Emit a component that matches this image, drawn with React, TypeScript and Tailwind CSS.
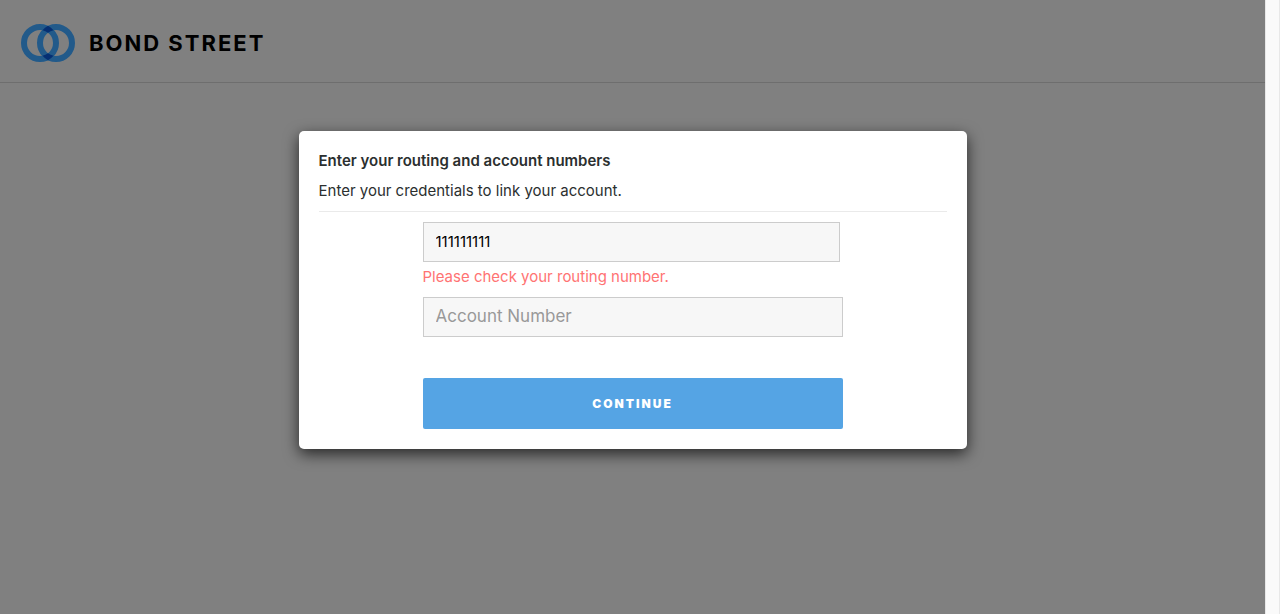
import { useState } from "react";

function Logo() {
  return (
    <a href="#" className="flex items-center gap-3.5 text-black">
      <svg viewBox="0 0 54 38" className="h-[38px] w-[54px]" fill="none" aria-hidden="true">
        <circle cx="19" cy="19" r="16" stroke="#225a8a" strokeWidth="6" />
        <circle cx="35" cy="19" r="16" stroke="#225a8a" strokeWidth="6" />
        <path
          fill="#052f73"
          d="M27 1.77A19 19 0 0 1 32.5 6.2A13 13 0 0 0 27 8.75A13 13 0 0 0 21.5 6.2A19 19 0 0 1 27 1.77ZM27 36.23A19 19 0 0 0 32.5 31.8A13 13 0 0 1 27 29.25A13 13 0 0 1 21.5 31.8A19 19 0 0 0 27 36.23Z"
        />
      </svg>
      <span className="text-[22px] leading-7 font-bold tracking-[2px]">BOND STREET</span>
    </a>
  );
}

const field =
  "block h-10 border border-[#ccc] bg-[#f7f7f7] px-3 pb-0.5 text-black outline-none placeholder:text-[#999]";

export default function App() {
  const [routing, setRouting] = useState("111111111");
  const [account, setAccount] = useState("");

  return (
    <div className="flex min-h-screen bg-[#808080] font-['Inter',sans-serif]">
      <div className="min-w-0 flex-1">
        <header className="flex h-[83px] items-center border-b border-[#6e6e6e] px-[21px] pt-1">
          <Logo />
        </header>
        <main className="px-4 pt-12">
          <section
            role="dialog"
            aria-labelledby="dialog-title"
            className="mx-auto max-w-[668px] rounded-[5px] bg-white p-5 text-[#2b2f2f] shadow-[0_5px_15px_rgba(0,0,0,0.7)]"
          >
            <h1 id="dialog-title" className="text-[15px] leading-5 font-semibold">
              Enter your routing and account numbers
            </h1>
            <p className="mt-2.5 border-b border-[#eaeaea] pb-2.5 text-[15px] leading-5">
              Enter your credentials to link your account.
            </p>
            <form className="mx-auto mt-2.5 max-w-[420px]" onSubmit={(e) => e.preventDefault()}>
              <div className="pr-[3px]">
                <input
                  aria-label="Routing Number"
                  aria-describedby="routing-error"
                  aria-invalid="true"
                  value={routing}
                  onChange={(e) => setRouting(e.target.value)}
                  className={`${field} w-full text-[15px]`}
                />
              </div>
              <p id="routing-error" className="pt-[5px] pb-2.5 text-[15px] leading-5 text-[#ff7373]">
                Please check your routing number.
              </p>
              <input
                aria-label="Account Number"
                placeholder="Account Number"
                value={account}
                onChange={(e) => setAccount(e.target.value)}
                className={`${field} w-full text-[17px]`}
              />
              <button
                type="submit"
                className="mt-[41px] block h-[51px] w-full rounded-xs bg-[#55a4e4] text-xs font-black tracking-[2px] text-white"
              >
                CONTINUE
              </button>
            </form>
          </section>
        </main>
      </div>
      <div className="w-[15px] shrink-0 border-x border-[#e8e8e8] bg-[#fafafa]" aria-hidden="true" />
    </div>
  );
}
